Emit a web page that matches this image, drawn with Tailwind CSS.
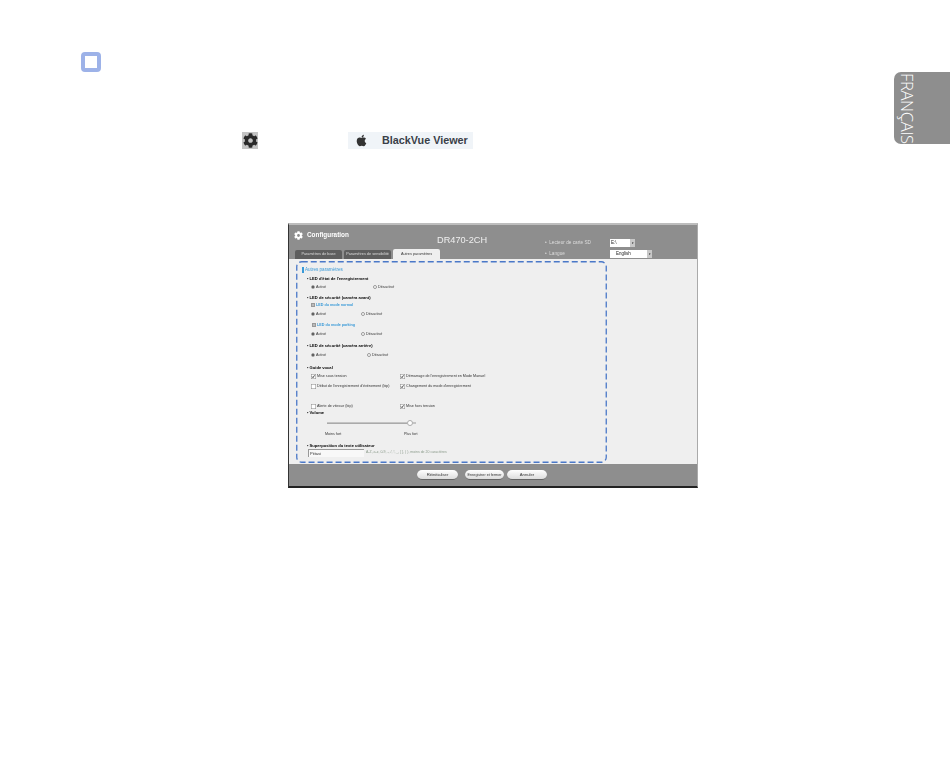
<!DOCTYPE html>
<html lang="fr">
<head>
    <meta charset="UTF-8">
    <title>BlackVue Viewer - Configuration</title>
    <script src="https://cdn.jsdelivr.net/npm/@tailwindcss/browser@4"></script>
</head>
<body class="bg-white font-['Liberation_Sans',sans-serif]">
    <div class="relative w-[950px] h-[760px] overflow-hidden pt-[52px]">
        <!-- onglet langue -->
        <div class="absolute right-0 top-[72px] w-[56px] h-[72px] bg-[#8e8e8e] rounded-l-[7px] flex items-center pl-[5px]">
            <span class="[writing-mode:vertical-rl] font-['Open_Sans',sans-serif] font-light text-[16.5px] leading-[17px] text-white tracking-[-0.3px]">FRANÇAIS</span>
        </div>

        <!-- note -->
        <div class="ml-[81px] w-[20px] h-[20px] border-[4px] border-[#9db2e8] rounded-[4px]"></div>

        <!-- ligne avec icones -->
        <div class="flex items-center mt-[60px] ml-[242px] h-[17px]">
            <div class="w-[16px] h-[17px] bg-[#c4c4c4] flex items-center justify-center">
                <svg class="w-[15px] h-[15px]" viewBox="0 0 512 512"><path fill="#2a2a2a" d="M487.4 315.7l-42.6-24.6c4.3-23.2 4.3-47 0-70.2l42.6-24.6c4.9-2.8 7.1-8.6 5.5-14-11.1-35.6-30-67.8-54.7-94.6-3.8-4.1-10-5.1-14.8-2.3L380.8 110c-17.9-15.4-38.5-27.3-60.8-35.1V25.8c0-5.6-3.9-10.5-9.4-11.7-36.7-8.2-74.3-7.8-109.2 0-5.5 1.2-9.4 6.1-9.4 11.7V75c-22.2 7.9-42.8 19.8-60.8 35.1L88.7 85.5c-4.9-2.8-11-1.9-14.8 2.3-24.7 26.7-43.6 58.9-54.7 94.6-1.7 5.4.6 11.2 5.5 14L67.3 221c-4.3 23.2-4.3 47 0 70.2l-42.6 24.6c-4.9 2.8-7.1 8.6-5.5 14 11.1 35.6 30 67.8 54.7 94.6 3.8 4.1 10 5.1 14.8 2.3l42.6-24.6c17.9 15.4 38.5 27.3 60.8 35.1v49.2c0 5.6 3.9 10.5 9.4 11.7 36.7 8.2 74.3 7.8 109.2 0 5.5-1.2 9.4-6.1 9.4-11.7v-49.2c22.2-7.9 42.8-19.8 60.8-35.1l42.6 24.6c4.9 2.8 11 1.9 14.8-2.3 24.7-26.7 43.6-58.9 54.7-94.6 1.5-5.5-.7-11.3-5.6-14.1zM256 336c-44.1 0-80-35.9-80-80s35.9-80 80-80 80 35.9 80 80-35.9 80-80 80z"/></svg>
            </div>
            <div class="ml-[90px] w-[125px] h-[17px] bg-[#f0f4f8] flex items-center pl-[8px]">
                <svg class="w-[11px] h-[13px]" viewBox="0 0 384 512"><path fill="#333" d="M318.7 268.7c-.2-36.7 16.4-64.4 50-84.8-18.8-26.9-47.2-41.7-84.7-44.6-35.5-2.8-74.3 20.7-88.5 20.7-15 0-49.4-19.7-76.4-19.7C63.3 141.2 4 184.8 4 273.5q0 39.3 14.4 81.2c12.8 36.7 59 126.7 107.2 125.2 25.2-.6 43-17.9 75.8-17.9 31.8 0 48.3 17.9 76.4 17.9 48.6-.7 90.4-82.5 102.6-119.3-65.2-30.7-61.7-90-61.7-91.9zm-56.6-164.2c27.3-32.4 24.8-61.9 24-72.5-24.1 1.4-52 16.4-67.9 34.9-17.5 19.8-27.8 44.3-25.6 71.9 26.1 2 49.9-11.4 69.5-34.3z"/></svg>
                <span class="ml-[15px] text-[10.8px] font-bold text-[#3a3f48]">BlackVue Viewer</span>
            </div>
        </div>

        <!-- fenetre de configuration -->
        <div class="ml-[288px] mt-[74px] w-[410px] h-[265px] border-t-[2px] border-l border-b-[2px] border-r border-t-[#bdbdbd] border-l-[#333] border-b-[#222] border-r-[#aaa] bg-[#8e8e8e] flex flex-col blur-[0.4px]">
            <div class="relative h-[34px] shrink-0">
                <div class="flex items-center pl-[5px] pt-[2px] h-[18px]">
                    <svg class="w-[9px] h-[9px]" viewBox="0 0 512 512"><path fill="#fff" d="M487.4 315.7l-42.6-24.6c4.3-23.2 4.3-47 0-70.2l42.6-24.6c4.9-2.8 7.1-8.6 5.5-14-11.1-35.6-30-67.8-54.7-94.6-3.8-4.1-10-5.1-14.8-2.3L380.8 110c-17.9-15.4-38.5-27.3-60.8-35.1V25.8c0-5.6-3.9-10.5-9.4-11.7-36.7-8.2-74.3-7.8-109.2 0-5.5 1.2-9.4 6.1-9.4 11.7V75c-22.2 7.9-42.8 19.8-60.8 35.1L88.7 85.5c-4.9-2.8-11-1.9-14.8 2.3-24.7 26.7-43.6 58.9-54.7 94.6-1.7 5.4.6 11.2 5.5 14L67.3 221c-4.3 23.2-4.3 47 0 70.2l-42.6 24.6c-4.9 2.8-7.1 8.6-5.5 14 11.1 35.6 30 67.8 54.7 94.6 3.8 4.1 10 5.1 14.8 2.3l42.6-24.6c17.9 15.4 38.5 27.3 60.8 35.1v49.2c0 5.6 3.9 10.5 9.4 11.7 36.7 8.2 74.3 7.8 109.2 0 5.5-1.2 9.4-6.1 9.4-11.7v-49.2c22.2-7.9 42.8-19.8 60.8-35.1l42.6 24.6c4.9 2.8 11 1.9 14.8-2.3 24.7-26.7 43.6-58.9 54.7-94.6 1.5-5.5-.7-11.3-5.6-14.1zM256 336c-44.1 0-80-35.9-80-80s35.9-80 80-80 80 35.9 80 80-35.9 80-80 80z"/></svg>
                    <span class="ml-[4px] text-[6.4px] font-bold text-white">Configuration</span>
                </div>
                <!-- onglets -->
                <div class="absolute left-[6px] bottom-0 flex gap-[2px] items-end">
                    <div class="w-[47px] h-[9px] rounded-t-[2px] bg-[#5e5e5e] text-[3.8px] leading-[9px] text-center text-[#ddd]">Paramètres de base</div>
                    <div class="w-[47px] h-[9px] rounded-t-[2px] bg-[#5e5e5e] text-[3.8px] leading-[9px] text-center text-[#ddd]">Paramètres de sensibilité</div>
                    <div class="w-[47px] h-[10px] rounded-t-[2px] bg-[#efefef] text-[3.8px] leading-[10px] text-center text-[#333]">Autres paramètres</div>
                </div>
                <div class="absolute left-[148px] top-[9px] text-[9.2px] leading-[12px] text-[#efefef]">DR470-2CH</div>
                <div class="absolute left-[256px] top-[14px] flex flex-col gap-[3px]">
                    <div class="flex items-center h-[8px]">
                        <span class="w-[65px] text-[4.7px] text-[#ddd]">•&nbsp; Lecteur de carte SD</span>
                        <div class="flex w-[25px] h-[8px] bg-white text-[4.5px] leading-[8px] text-[#222]">
                            <span class="flex-1 pl-[1px]">E:\</span>
                            <span class="w-[5px] h-[8px] bg-[#c8c8c8] text-[3px] text-center text-black">▾</span>
                        </div>
                    </div>
                    <div class="flex items-center h-[8px]">
                        <span class="w-[65px] text-[4.7px] text-[#ddd]">•&nbsp; Langue</span>
                        <div class="flex w-[42px] h-[8px] bg-white text-[4.5px] leading-[8px] text-[#222]">
                            <span class="flex-1 pl-[6px]">English</span>
                            <span class="w-[5px] h-[8px] bg-[#c8c8c8] text-[3px] text-center text-black">▾</span>
                        </div>
                    </div>
                </div>
            </div>

            <div class="h-[205px] shrink-0 bg-[#efefef] pl-[7px] pt-[2px]">
                <div class="relative w-[311px] h-[202px] pl-[6px] pt-[6px] text-[3.7px] text-[#333]">
                    <svg class="absolute inset-0 w-[311px] h-[202px]" viewBox="0 0 311 202" fill="none"><rect x="0.75" y="0.75" width="309.5" height="200.5" rx="5" stroke="#4a78c8" stroke-width="1.3" stroke-dasharray="6 3"/></svg>
                    <div class="flex items-center h-[6px] text-[4.6px] text-[#3a9ad8]"><span class="w-[2px] h-[6px] bg-[#3a9ad8] mr-[1px] -mt-[1px]"></span>Autres paramètres</div>

                    <div class="flex items-center h-[6px] mt-[3px] pl-[5px] text-[4.1px] font-bold text-black">• LED d'état de l'enregistrement</div>
                    <div class="flex items-center h-[6px] mt-[3px] pl-[9px]">
                        <span class="w-[4px] h-[4px] rounded-full border border-[#aaa] bg-[#444] mr-[1px] mb-[2px]"></span><span class="w-[57px]">Activé</span>
                        <span class="w-[4px] h-[4px] rounded-full border border-[#999] bg-white mr-[1px] mb-[2px]"></span><span>Désactivé</span>
                    </div>

                    <div class="flex items-center h-[6px] mt-[4px] pl-[5px] text-[4.1px] font-bold text-black">• LED de sécurité (caméra avant)</div>
                    <div class="flex items-center h-[6px] mt-[2px] pl-[9px] text-[#3a9ad8] font-bold">
                        <span class="w-[4px] h-[4px] border border-[#999] bg-[#bbb] mr-[1px] mb-[2px]"></span>LED du mode normal
                    </div>
                    <div class="flex items-center h-[6px] mt-[3px] pl-[9px]">
                        <span class="w-[4px] h-[4px] rounded-full border border-[#aaa] bg-[#444] mr-[1px] mb-[2px]"></span><span class="w-[45px]">Activé</span>
                        <span class="w-[4px] h-[4px] rounded-full border border-[#999] bg-white mr-[1px] mb-[2px]"></span><span>Désactivé</span>
                    </div>
                    <div class="flex items-center h-[6px] mt-[5px] pl-[10px] text-[#3a9ad8] font-bold">
                        <span class="w-[4px] h-[4px] border border-[#999] bg-[#bbb] mr-[1px] mb-[2px]"></span>LED du mode parking
                    </div>
                    <div class="flex items-center h-[6px] mt-[3px] pl-[9px]">
                        <span class="w-[4px] h-[4px] rounded-full border border-[#aaa] bg-[#444] mr-[1px] mb-[2px]"></span><span class="w-[45px]">Activé</span>
                        <span class="w-[4px] h-[4px] rounded-full border border-[#999] bg-white mr-[1px] mb-[2px]"></span><span>Désactivé</span>
                    </div>

                    <div class="flex items-center h-[6px] mt-[5px] pl-[5px] text-[4.1px] font-bold text-black">• LED de sécurité (caméra arrière)</div>
                    <div class="flex items-center h-[6px] mt-[4px] pl-[9px]">
                        <span class="w-[4px] h-[4px] rounded-full border border-[#aaa] bg-[#444] mr-[1px] mb-[2px]"></span><span class="w-[51px]">Activé</span>
                        <span class="w-[4px] h-[4px] rounded-full border border-[#999] bg-white mr-[1px] mb-[2px]"></span><span>Désactivé</span>
                    </div>

                    <div class="flex items-center h-[6px] mt-[6px] pl-[5px] text-[4.1px] font-bold text-black">• Guide vocal</div>
                    <div class="flex items-center h-[6px] mt-[3px] pl-[9px]">
                        <svg class="w-[5px] h-[5px] mb-[2px]" viewBox="0 0 5 5" fill="none"><rect x="0.25" y="0.25" width="4.5" height="4.5" fill="#fff" stroke="#888" stroke-width="0.5"/><path d="M1 2.5l1 1.2 1.5-2.4" stroke="#222" stroke-width="0.8"/></svg><span class="w-[84px] pl-[1px]">Mise sous tension</span>
                        <svg class="w-[5px] h-[5px] mb-[2px]" viewBox="0 0 5 5" fill="none"><rect x="0.25" y="0.25" width="4.5" height="4.5" fill="#fff" stroke="#888" stroke-width="0.5"/><path d="M1 2.5l1 1.2 1.5-2.4" stroke="#222" stroke-width="0.8"/></svg><span class="pl-[1px]">Démarrage de l'enregistrement en Mode Manuel</span>
                    </div>
                    <div class="flex items-center h-[6px] mt-[4px] pl-[9px]">
                        <svg class="w-[5px] h-[5px] mb-[2px]" viewBox="0 0 5 5" fill="none"><rect x="0.25" y="0.25" width="4.5" height="4.5" fill="#fff" stroke="#888" stroke-width="0.5"/></svg><span class="w-[84px] pl-[1px]">Début de l'enregistrement d'événement (bip)</span>
                        <svg class="w-[5px] h-[5px] mb-[2px]" viewBox="0 0 5 5" fill="none"><rect x="0.25" y="0.25" width="4.5" height="4.5" fill="#fff" stroke="#888" stroke-width="0.5"/><path d="M1 2.5l1 1.2 1.5-2.4" stroke="#222" stroke-width="0.8"/></svg><span class="pl-[1px]">Changement du mode d'enregistrement</span>
                    </div>
                    <div class="flex items-center h-[6px] mt-[14px] pl-[9px]">
                        <svg class="w-[5px] h-[5px] mb-[2px]" viewBox="0 0 5 5" fill="none"><rect x="0.25" y="0.25" width="4.5" height="4.5" fill="#fff" stroke="#888" stroke-width="0.5"/></svg><span class="w-[84px] pl-[1px]">Alerte de vitesse (bip)</span>
                        <svg class="w-[5px] h-[5px] mb-[2px]" viewBox="0 0 5 5" fill="none"><rect x="0.25" y="0.25" width="4.5" height="4.5" fill="#fff" stroke="#888" stroke-width="0.5"/><path d="M1 2.5l1 1.2 1.5-2.4" stroke="#222" stroke-width="0.8"/></svg><span class="pl-[1px]">Mise hors tension</span>
                    </div>
                    <div class="flex items-center h-[6px] pl-[5px] text-[4.1px] font-bold text-black">• Volume</div>

                    <div class="flex items-center h-[6px] mt-[4px] pl-[25px]">
                        <div class="w-[80px] h-[2px] bg-[#c4c4c4] border-b border-[#aaa]"></div>
                        <div class="w-[6px] h-[6px] rounded-full border border-[#aaa] bg-white"></div>
                        <div class="w-[3px] h-[2px] bg-[#c4c4c4]"></div>
                    </div>
                    <div class="flex items-center h-[6px] mt-[6px] pl-[23px]">
                        <span class="w-[79px]">Moins fort</span><span>Plus fort</span>
                    </div>

                    <div class="flex items-center h-[6px] mt-[5px] pl-[5px] text-[4.1px] font-bold text-black">• Superposition du texte utilisateur</div>
                    <div class="flex items-center h-[8px] pl-[6px]">
                        <div class="w-[56px] h-[8px] bg-[#f8f8f8] border-t border-l border-[#999] text-[4px] leading-[7px] pl-[1px] text-[#333]">Pittasi</div>
                        <span class="ml-[2px] text-[3.5px] text-[#8a9a8a]">A-Z, a-z, 0-9, -, /, !, _, [ ], ( ), moins de 20 caractères</span>
                    </div>
                </div>
            </div>

            <div class="flex-1 flex items-center pl-[128px] gap-[7px]">
                <div class="w-[41px] h-[10px] rounded-full bg-gradient-to-b from-white to-[#ddd] border-b border-[#666] text-[4.2px] leading-[9px] text-center text-[#333]">Réinitialiser</div>
                <div class="w-[39px] h-[10px] rounded-full bg-gradient-to-b from-white to-[#ddd] border-b border-[#666] text-[3.7px] leading-[10px] text-center text-[#333] -mr-[4px]">Enregistrer et fermer</div>
                <div class="w-[40px] h-[10px] rounded-full bg-gradient-to-b from-white to-[#ddd] border-b border-[#666] text-[4.2px] leading-[9px] text-center text-[#333]">Annuler</div>
            </div>
        </div>
    </div>
</body>
</html>
